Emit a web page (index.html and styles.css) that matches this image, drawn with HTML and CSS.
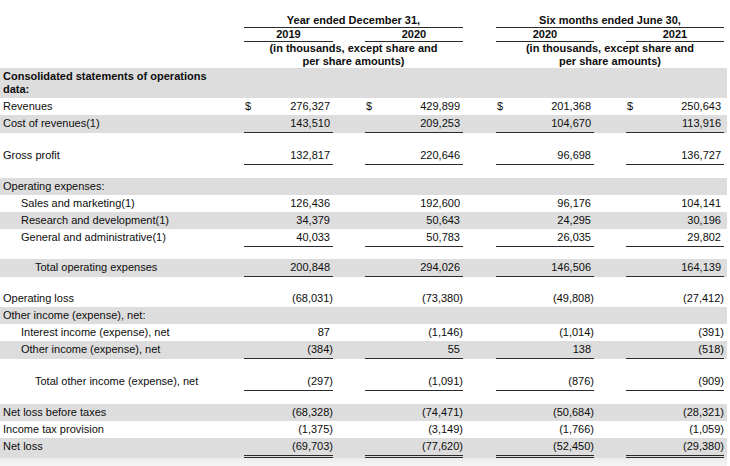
FILE: index.html
```html
<!DOCTYPE html>
<html lang="en">
<head>
<meta charset="utf-8">
<title>Consolidated statements of operations</title>
<link rel="stylesheet" href="styles.css">
</head>
<body>
<div class="sheet">
  <div class="head">
    <div class="row h1">
      <div class="hc span-ab">Year ended December 31,</div>
      <div class="hc span-cd">Six months ended June 30,</div>
    </div>
    <div class="row h2">
      <div class="hc a">2019</div>
      <div class="hc b">2020</div>
      <div class="hc c">2020</div>
      <div class="hc d">2021</div>
    </div>
    <div class="row h3">
      <div class="hc span-ab">(in thousands, except share and<br>per share amounts)</div>
      <div class="hc span-cd">(in thousands, except share and<br>per share amounts)</div>
    </div>
  </div>

  <div class="row gray">
    <div class="lbl bold">Consolidated statements of operations data:</div>
  </div>
  <div class="row">
    <div class="lbl">Revenues</div>
    <div class="n a"><span>$</span><span class="v">276,327</span></div>
    <div class="n b"><span>$</span><span class="v">429,899</span></div>
    <div class="n c"><span>$</span><span class="v">201,368</span></div>
    <div class="n d"><span>$</span><span class="v">250,643</span></div>
  </div>
  <div class="row gray ul">
    <div class="lbl">Cost of revenues(1)</div>
    <div class="n a"><span class="v">143,510</span></div>
    <div class="n b"><span class="v">209,253</span></div>
    <div class="n c"><span class="v">104,670</span></div>
    <div class="n d"><span class="v">113,916</span></div>
  </div>
  <div class="sp sp14"></div>
  <div class="row ul">
    <div class="lbl">Gross profit</div>
    <div class="n a"><span class="v">132,817</span></div>
    <div class="n b"><span class="v">220,646</span></div>
    <div class="n c"><span class="v">96,698</span></div>
    <div class="n d"><span class="v">136,727</span></div>
  </div>
  <div class="sp sp13"></div>
  <div class="row gray">
    <div class="lbl">Operating expenses:</div>
  </div>
  <div class="row">
    <div class="lbl in1">Sales and marketing(1)</div>
    <div class="n a"><span class="v">126,436</span></div>
    <div class="n b"><span class="v">192,600</span></div>
    <div class="n c"><span class="v">96,176</span></div>
    <div class="n d"><span class="v">104,141</span></div>
  </div>
  <div class="row gray">
    <div class="lbl in1">Research and development(1)</div>
    <div class="n a"><span class="v">34,379</span></div>
    <div class="n b"><span class="v">50,643</span></div>
    <div class="n c"><span class="v">24,295</span></div>
    <div class="n d"><span class="v">30,196</span></div>
  </div>
  <div class="row ul">
    <div class="lbl in1">General and administrative(1)</div>
    <div class="n a"><span class="v">40,033</span></div>
    <div class="n b"><span class="v">50,783</span></div>
    <div class="n c"><span class="v">26,035</span></div>
    <div class="n d"><span class="v">29,802</span></div>
  </div>
  <div class="sp sp12"></div>
  <div class="row gray ul">
    <div class="lbl in2">Total operating expenses</div>
    <div class="n a"><span class="v">200,848</span></div>
    <div class="n b"><span class="v">294,026</span></div>
    <div class="n c"><span class="v">146,506</span></div>
    <div class="n d"><span class="v">164,139</span></div>
  </div>
  <div class="sp sp13"></div>
  <div class="row">
    <div class="lbl">Operating loss</div>
    <div class="n a neg"><span class="v">(68,031)</span></div>
    <div class="n b neg"><span class="v">(73,380)</span></div>
    <div class="n c neg"><span class="v">(49,808)</span></div>
    <div class="n d neg"><span class="v">(27,412)</span></div>
  </div>
  <div class="row gray">
    <div class="lbl">Other income (expense), net:</div>
  </div>
  <div class="row">
    <div class="lbl in1">Interest income (expense), net</div>
    <div class="n a"><span class="v">87</span></div>
    <div class="n b neg"><span class="v">(1,146)</span></div>
    <div class="n c neg"><span class="v">(1,014)</span></div>
    <div class="n d neg"><span class="v">(391)</span></div>
  </div>
  <div class="row gray ul">
    <div class="lbl in1">Other income (expense), net</div>
    <div class="n a neg"><span class="v">(384)</span></div>
    <div class="n b"><span class="v">55</span></div>
    <div class="n c"><span class="v">138</span></div>
    <div class="n d neg"><span class="v">(518)</span></div>
  </div>
  <div class="sp sp14"></div>
  <div class="row ul">
    <div class="lbl in2">Total other income (expense), net</div>
    <div class="n a neg"><span class="v">(297)</span></div>
    <div class="n b neg"><span class="v">(1,091)</span></div>
    <div class="n c neg"><span class="v">(876)</span></div>
    <div class="n d neg"><span class="v">(909)</span></div>
  </div>
  <div class="sp sp13"></div>
  <div class="row gray">
    <div class="lbl">Net loss before taxes</div>
    <div class="n a neg"><span class="v">(68,328)</span></div>
    <div class="n b neg"><span class="v">(74,471)</span></div>
    <div class="n c neg"><span class="v">(50,684)</span></div>
    <div class="n d neg"><span class="v">(28,321)</span></div>
  </div>
  <div class="row">
    <div class="lbl">Income tax provision</div>
    <div class="n a neg"><span class="v">(1,375)</span></div>
    <div class="n b neg"><span class="v">(3,149)</span></div>
    <div class="n c neg"><span class="v">(1,766)</span></div>
    <div class="n d neg"><span class="v">(1,059)</span></div>
  </div>
  <div class="row gray dul">
    <div class="lbl">Net loss</div>
    <div class="n a neg"><span class="v">(69,703)</span></div>
    <div class="n b neg"><span class="v">(77,620)</span></div>
    <div class="n c neg"><span class="v">(52,450)</span></div>
    <div class="n d neg"><span class="v">(29,380)</span></div>
  </div>
  <div class="fade"></div>
</div>
</body>
</html>
```

FILE: styles.css
```css
html, body {
  margin: 0;
  padding: 0;
  background: #ffffff;
}

body {
  font-family: "Liberation Sans", Arial, sans-serif;
  font-size: 11px;
  line-height: 13px;
  color: #0d0d0d;
}

.sheet {
  width: 727px;
}

.head {
  padding-top: 12px;
}

.row {
  display: grid;
  grid-template-columns: 244px 89px 32px 98px 33px 98px 32px 98px 3px;
}

.gray {
  background: #dddddd;
}

.hc {
  font-weight: bold;
  text-align: center;
}

.h1 .hc {
  padding-top: 2px;
  border-bottom: 1px solid #2a2a2a;
}

.h2 .hc {
  border-bottom: 1px solid #2a2a2a;
}

.span-ab { grid-column: 2 / 5; }
.span-cd { grid-column: 6 / 9; }
.a { grid-column: 2; }
.b { grid-column: 4; }
.c { grid-column: 6; }
.d { grid-column: 8; }

.lbl {
  grid-column: 1;
  padding: 2px 24px 2px 3px;
}

.bold {
  font-weight: bold;
}

.in1 { padding-left: 21px; }
.in2 { padding-left: 35px; }

.n {
  display: flex;
  padding: 2px 3px 2px 1px;
  white-space: nowrap;
}

.n .v {
  margin-left: auto;
}

.n.neg {
  padding-right: 0;
}

.ul .n {
  border-bottom: 1px solid #2a2a2a;
}

.dul .n {
  border-bottom: 3px double #2a2a2a;
}

.sp12 { height: 12px; }
.sp13 { height: 13px; }
.sp14 { height: 14px; }

.fade {
  height: 9px;
  background: linear-gradient(#ececec, #f6f6f6);
}
```
